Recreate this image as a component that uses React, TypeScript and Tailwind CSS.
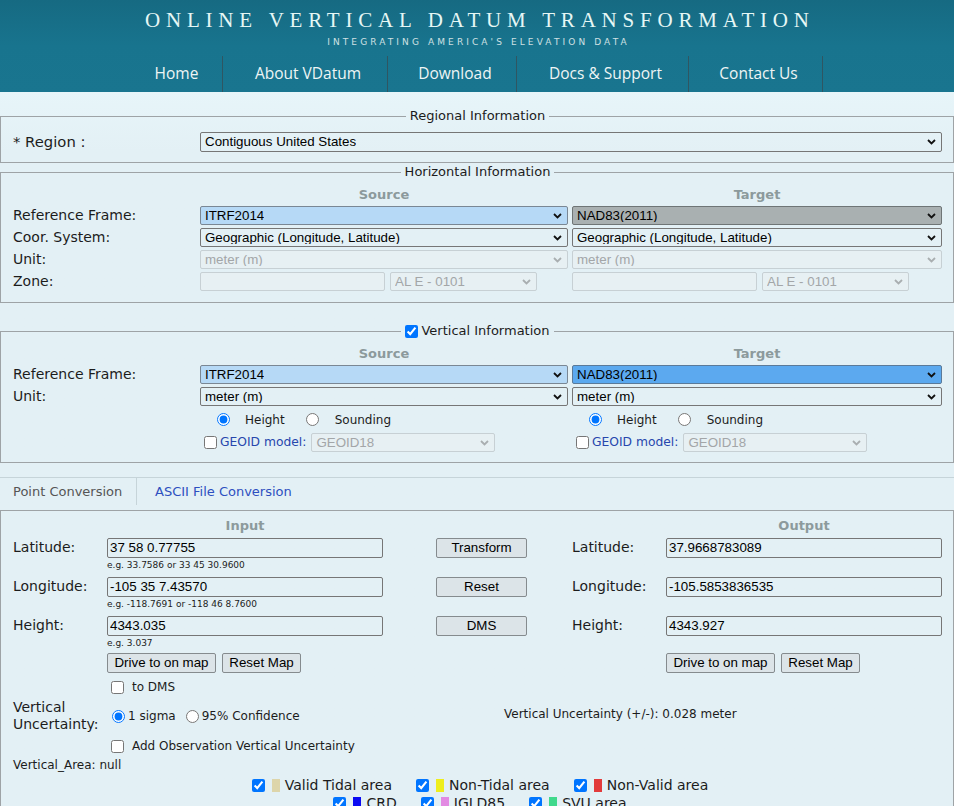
import clsx from "clsx";

const ctrl = "font-['Liberation_Sans',Arial,sans-serif] text-[13.33px]";

type Tone = "plain" | "light" | "gray" | "blue" | "off";

function Select({
    value,
    tone = "plain",
    className,
}: {
    value: string;
    tone?: Tone;
    className?: string;
}) {
    const off = tone === "off";
    return (
        <div
            role="combobox"
            aria-disabled={off}
            className={clsx(
                "flex h-[19px] items-center justify-between rounded-[2px] border pl-[4px] pr-[5px] leading-none",
                ctrl,
                tone === "plain" && "border-[#767676] text-black",
                tone === "light" && "border-[#7a8794] bg-[#b6d9f6] text-black",
                tone === "gray" && "border-[#6f7576] bg-[#a9b0b1] text-black",
                tone === "blue" && "border-[#5b7a99] bg-[#5ca9ef] text-black",
                off && "border-[#c7d0d4] bg-[#e7f0f3] text-[#a3a6a8]",
                className
            )}
        >
            <span className="truncate">{value}</span>
            <svg className="shrink-0" width="9" height="6" viewBox="0 0 9 6">
                <path
                    d="M1 1l3.5 3.5L8 1"
                    fill="none"
                    stroke={off ? "#a9aeb0" : "#111"}
                    strokeWidth="1.8"
                />
            </svg>
        </div>
    );
}

function TextInput({ value, className }: { value: string; className?: string }) {
    return (
        <input
            type="text"
            defaultValue={value}
            className={clsx(
                "h-[20px] rounded-[2px] border border-[#767676] bg-transparent px-[2px] text-black outline-none",
                ctrl,
                className
            )}
        />
    );
}

function Btn({ label, className }: { label: string; className?: string }) {
    return (
        <button
            className={clsx(
                "h-[20px] rounded-[2px] border border-[#858b8e] bg-[#dce4e8] leading-[18px] text-black",
                ctrl,
                className
            )}
        >
            {label}
        </button>
    );
}

function ColHead({ children }: { children: React.ReactNode }) {
    return (
        <div className="text-center text-[13px] font-bold leading-[16px] text-[#8c9a9c]">
            {children}
        </div>
    );
}

function Label({ children }: { children: React.ReactNode }) {
    return <div className="flex h-[19px] items-center text-[14px]">{children}</div>;
}

function RadioPair() {
    return (
        <div className="flex h-[21px] items-center pl-[17px] text-[12px]">
            <input type="radio" defaultChecked className="m-0 h-[13px] w-[13px]" />
            <span className="ml-[15px]">Height</span>
            <input type="radio" className="m-0 ml-[21px] h-[13px] w-[13px]" />
            <span className="ml-[16px]">Sounding</span>
        </div>
    );
}

function Geoid() {
    return (
        <div className="flex h-[19px] items-center">
            <input type="checkbox" className="m-0 ml-[4px] h-[13px] w-[13px]" />
            <span className="ml-[3px] text-[12.3px] text-[#2747ad]">GEOID model:</span>
            <Select value="GEOID18" tone="off" className="ml-[5px] w-[184px]" />
        </div>
    );
}

function Zone() {
    return (
        <div className="flex h-[19px] gap-[5px]">
            <input
                disabled
                className="h-[19px] w-[185px] rounded-[2px] border border-[#c7d0d4] bg-[#e7f0f3]"
            />
            <Select value="AL E - 0101" tone="off" className="w-[147px]" />
        </div>
    );
}

function CoordRow({
    label,
    input,
    output,
    button,
    hint,
}: {
    label: string;
    input: string;
    output: string;
    button: string;
    hint: string;
}) {
    return (
        <>
            <div className="grid h-[20px] grid-cols-[94px_276px_53px_91px_45px_94px_276px] items-center text-[14px]">
                <span>{label}</span>
                <TextInput value={input} />
                <span />
                <Btn label={button} />
                <span />
                <span>{label}</span>
                <TextInput value={output} />
            </div>
            <div className="h-[19px] pl-[94px] pt-[3px] text-[9px] leading-[11px]">{hint}</div>
        </>
    );
}

function Area({ color, label }: { color: string; label: string }) {
    return (
        <div className="flex items-center">
            <input type="checkbox" defaultChecked className="m-0 h-[13px] w-[13px]" />
            <span className={clsx("ml-[7px] h-[13px] w-[8px]", color)} />
            <span className="ml-[5px]">{label}</span>
        </div>
    );
}

const navItems = [
    { label: "Home", w: "w-[98px]" },
    { label: "About VDatum", w: "w-[165px]" },
    { label: "Download", w: "w-[129px]" },
    { label: "Docs & Support", w: "w-[172px]" },
    { label: "Contact Us", w: "w-[134px]" },
];

export default function App() {
    return (
        <div className="min-h-screen bg-[#e3f0f5]">
            <header className="h-[92px] bg-gradient-to-b from-[#166a82] via-[#18748e] to-[#19758f]">
                <div className="pl-[5.8px] pt-[5px] text-center font-['Liberation_Serif',serif] text-[21px] leading-[30px] tracking-[5.8px] text-[#e6f7f5]">
                    ONLINE VERTICAL DATUM TRANSFORMATION
                </div>
                <div className="mt-[1px] pl-[3px] text-center font-['DejaVu_Sans',sans-serif] text-[9px] leading-[12px] tracking-[3.1px] text-[#cfe0e3]">
                    INTEGRATING AMERICA'S ELEVATION DATA
                </div>
                <nav className="mt-[8px] flex justify-center pr-[6px] font-['Open_Sans',sans-serif] text-[15.5px] text-[#eef5f5]">
                    {navItems.map((item) => (
                        <div
                            key={item.label}
                            className={clsx(
                                "flex h-[36px] items-center justify-center border-r border-[#2f5662] pl-[6px]",
                                item.w
                            )}
                        >
                            {item.label}
                        </div>
                    ))}
                </nav>
            </header>

            <main className="bg-gradient-to-b from-[#e7f5f9] to-[#e3f0f5] to-[60px] pt-[16px] font-['DejaVu_Sans',Verdana,sans-serif] text-[#1c1c1c]">
                <fieldset className="border border-[#9ea3a6] pb-[10px] pl-[12px] pr-[11px]">
                    <legend className="mx-auto px-[4px] text-[13px] leading-[16px]">
                        Regional Information
                    </legend>
                    <div className="mt-[8px] flex h-[20px] items-center">
                        <span className="w-[187px] text-[14.8px]">* Region :</span>
                        <Select value="Contiguous United States" className="h-[20px] flex-1" />
                    </div>
                </fieldset>

                <fieldset className="mt-[1px] border border-[#9ea3a6] pb-[11px] pl-[12px] pr-[11px]">
                    <legend className="mx-auto px-[4px] text-[13px] leading-[16px]">
                        Horizontal Information
                    </legend>
                    <div className="mt-[7px] grid grid-cols-[183px_368px_1fr] gap-x-[4px] gap-y-[3px]">
                        <span />
                        <ColHead>Source</ColHead>
                        <ColHead>Target</ColHead>

                        <Label>Reference Frame:</Label>
                        <Select value="ITRF2014" tone="light" />
                        <Select value="NAD83(2011)" tone="gray" />

                        <Label>Coor. System:</Label>
                        <Select value="Geographic (Longitude, Latitude)" />
                        <Select value="Geographic (Longitude, Latitude)" />

                        <Label>Unit:</Label>
                        <Select value="meter (m)" tone="off" />
                        <Select value="meter (m)" tone="off" />

                        <Label>Zone:</Label>
                        <Zone />
                        <Zone />
                    </div>
                </fieldset>

                <fieldset className="mt-[20px] border border-[#9ea3a6] pb-[10px] pl-[12px] pr-[11px]">
                    <legend className="mx-auto flex items-center px-[4px] text-[13px] leading-[16px]">
                        <input type="checkbox" defaultChecked className="m-0 mr-[3px] h-[13px] w-[13px]" />
                        Vertical Information
                    </legend>
                    <div className="mt-[7px] grid grid-cols-[183px_368px_1fr] gap-x-[4px] gap-y-[3px]">
                        <span />
                        <ColHead>Source</ColHead>
                        <ColHead>Target</ColHead>

                        <Label>Reference Frame:</Label>
                        <Select value="ITRF2014" tone="light" />
                        <Select value="NAD83(2011)" tone="blue" />

                        <Label>Unit:</Label>
                        <Select value="meter (m)" />
                        <Select value="meter (m)" />

                        <span />
                        <RadioPair />
                        <RadioPair />

                        <span />
                        <Geoid />
                        <Geoid />
                    </div>
                </fieldset>

                <div className="mt-[14px] flex h-[28px] border-t border-[#c6d4d9] text-[13px]">
                    <div className="flex w-[137px] items-center border-r border-[#c6d4d9] pl-[13px] text-[#555]">
                        Point Conversion
                    </div>
                    <div className="flex items-center pl-[18px] text-[#2d4fc0]">
                        ASCII File Conversion
                    </div>
                </div>

                <section className="mt-[5px] border-l border-r border-t border-[#9ea3a6] pb-[20px] pl-[12px] pr-[12px] pt-[7px]">
                    <div className="grid grid-cols-[94px_276px_53px_91px_45px_94px_276px]">
                        <span />
                        <ColHead>Input</ColHead>
                        <span />
                        <span />
                        <span />
                        <span />
                        <ColHead>Output</ColHead>
                    </div>
                    <div className="mt-[3px]">
                        <CoordRow
                            label="Latitude:"
                            input="37 58 0.77755"
                            output="37.9668783089"
                            button="Transform"
                            hint="e.g. 33.7586 or 33 45 30.9600"
                        />
                        <CoordRow
                            label="Longitude:"
                            input="-105 35 7.43570"
                            output="-105.5853836535"
                            button="Reset"
                            hint="e.g. -118.7691 or -118 46 8.7600"
                        />
                        <CoordRow
                            label="Height:"
                            input="4343.035"
                            output="4343.927"
                            button="DMS"
                            hint="e.g. 3.037"
                        />
                    </div>
                    <div className="-mt-[1px] grid h-[20px] grid-cols-[94px_276px_53px_91px_45px_94px_276px]">
                        <span />
                        <div className="flex gap-[6px]">
                            <Btn label="Drive to on map" className="w-[109px]" />
                            <Btn label="Reset Map" className="w-[79px]" />
                        </div>
                        <span />
                        <span />
                        <span />
                        <span />
                        <div className="flex gap-[6px]">
                            <Btn label="Drive to on map" className="w-[109px]" />
                            <Btn label="Reset Map" className="w-[79px]" />
                        </div>
                    </div>

                    <div className="mt-[5px] flex h-[18px] items-center pl-[98px] text-[12px]">
                        <input type="checkbox" className="m-0 h-[13px] w-[13px]" />
                        <span className="ml-[8px]">to DMS</span>
                    </div>

                    <div className="mt-[3px] grid grid-cols-[94px_397px_1fr] items-center">
                        <div className="text-[14px] leading-[17px]">
                            Vertical
                            <br />
                            Uncertainty:
                        </div>
                        <div className="flex items-center pl-[5px] text-[12px]">
                            <input type="radio" defaultChecked className="m-0 h-[13px] w-[13px]" />
                            <span className="ml-[3px]">1 sigma</span>
                            <input type="radio" className="m-0 ml-[10px] h-[13px] w-[13px]" />
                            <span className="ml-[3px]">95% Confidence</span>
                        </div>
                        <div className="-mt-[4px] text-[12px]">
                            Vertical Uncertainty (+/-): 0.028 meter
                        </div>
                    </div>

                    <div className="mt-[4px] flex h-[18px] items-center pl-[98px] text-[12px]">
                        <input type="checkbox" className="m-0 h-[13px] w-[13px]" />
                        <span className="ml-[8px]">Add Observation Vertical Uncertainty</span>
                    </div>

                    <div className="mt-[2px] text-[12px] leading-[16px]">Vertical_Area: null</div>

                    <div className="mt-[3px] flex h-[18px] items-center justify-center gap-[24px] pl-[6px] text-[14px]">
                        <Area color="bg-[#ddd5aa]" label="Valid Tidal area" />
                        <Area color="bg-[#eeee1c]" label="Non-Tidal area" />
                        <Area color="bg-[#e23b3b]" label="Non-Valid area" />
                    </div>
                    <div className="flex h-[18px] items-center justify-center gap-[24px] pl-[6px] text-[14px]">
                        <Area color="bg-[#0a0af2]" label="CRD" />
                        <Area color="bg-[#e28ae2]" label="IGLD85" />
                        <Area color="bg-[#40d98c]" label="SVU area" />
                    </div>
                </section>
            </main>
        </div>
    );
}
